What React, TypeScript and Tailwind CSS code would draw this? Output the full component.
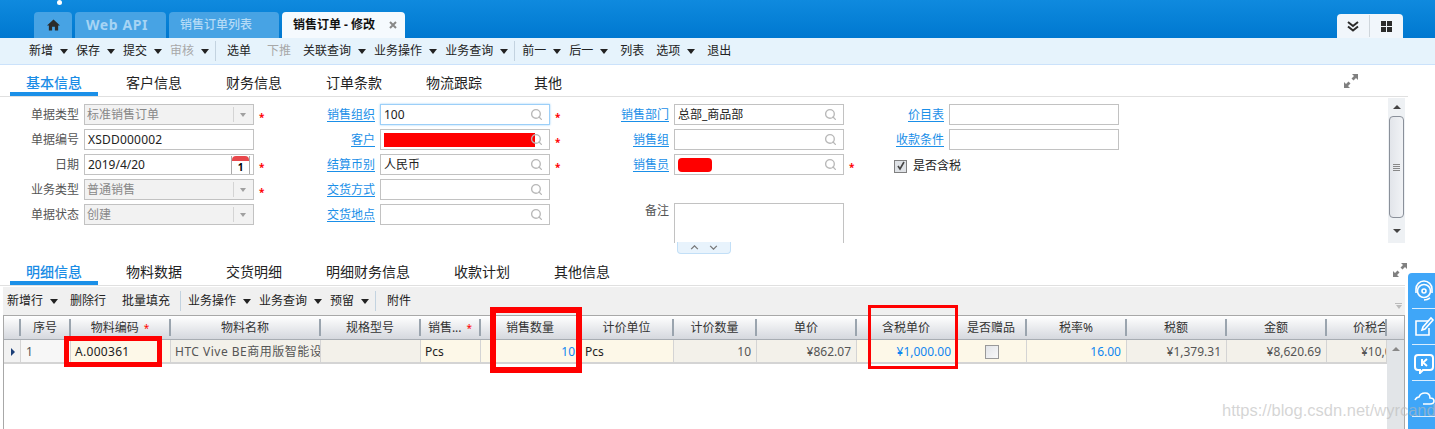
import React from "react";
import { Search } from "lucide-react";

const Caret = () => (
  <span className="ml-[7px] h-0 w-0 border-x-[4px] border-t-[5px] border-x-transparent border-t-[#222]"></span>
);

// toolbar entry, with a dropdown caret or as a plain button
const ToolItem = ({ label, menu, off }: { label: string; menu?: boolean; off?: boolean }) => (
  <div className={`flex items-center ${menu ? "" : "mx-1"} ${off ? "text-[#a8a8a8]" : "text-[#222]"}`}>
    {label}
    {menu && <Caret />}
  </div>
);

const ToolSep = () => <div className="-ml-[2px] -mr-px h-[20px] w-px bg-[#c3d3e0]"></div>;

const ExpandIcon = ({ className }: { className: string }) => (
  <svg viewBox="0 0 14 14" className={`h-[14px] w-[14px] ${className}`} fill="#808080">
    <path d="M8 0h6v6l-2-2-2.5 2.500-2-2L10 2z" />
    <path d="M0 14V8l2 2 2.500-2.500 2 2L4 12l2 2z" />
  </svg>
);

const TabRow = ({ tabs, right }: { tabs: { label: string; active?: boolean; className?: string }[]; right: React.ReactNode }) => (
  <div className="flex items-start justify-between border-b border-[#e0e0e0]">
    <div className="ml-[10px] flex gap-3 text-[14px] leading-[18px]">
      {tabs.map((t) => (
        <div
          key={t.label}
          className={`box-content flex h-[18px] items-center border-b-4 px-4 ${t.active ? "border-[#1b90e8] text-[#1b8de6] font-medium" : "border-transparent text-[#222]"} ${t.className ?? ""}`}
        >
          {t.label}
        </div>
      ))}
    </div>
    {right}
  </div>
);

const Star = () => <span className="w-[20px] pl-[5px] pt-[4px] text-[10px] font-bold leading-[16px] text-[#f00]">*</span>;

const Label = ({ text, link, w }: { text: string; link?: boolean; w: string }) => (
  <div className={`${w} mr-[5px] shrink-0 text-right ${link ? "text-[#1a8fe8]" : "text-[#555]"}`}>
    <span className={link ? "underline underline-offset-2" : ""}>{text}</span>
  </div>
);

const Lookup = ({ value, focus, children }: { value?: string; focus?: boolean; children?: React.ReactNode }) => (
  <div className={`flex h-[21px] w-[170px] items-center justify-between border pl-[3px] pr-[6px] text-[#222] ${focus ? "border-[#9ccff8] shadow-[0_0_2px_#9ccff8]" : "border-[#c2c2c2]"}`}>
    {children ?? <span>{value}</span>}
    <Search size={13} strokeWidth={2.5} className="shrink-0 text-[#b8b8b8]" />
  </div>
);

const Select = ({ value }: { value: string }) => (
  <div className="flex h-[21px] w-[170px] items-center border border-[#c2c2c2] bg-[#f2f2f2] pl-[2px] text-[#888]">
    <span className="flex-1">{value}</span>
    <div className="flex h-[15px] w-[20px] items-center justify-center border-l border-[#d4d4d4] pr-px">
      <span className="h-0 w-0 border-x-[3.5px] border-t-[4px] border-x-transparent border-t-[#a0a0a0]"></span>
    </div>
  </div>
);

const Row = ({ children }: { children: React.ReactNode }) => <div className="flex h-[21px] items-center">{children}</div>;

const columns = [
  { w: "w-[17px]", title: "" },
  { w: "w-[50px]", title: "序号" },
  { w: "w-[100px]", title: "物料编码", star: true },
  { w: "w-[150px]", title: "物料名称" },
  { w: "w-[100px]", title: "规格型号" },
  { w: "w-[60px]", title: "销售...", star: true },
  { w: "w-[100px]", title: "销售数量" },
  { w: "w-[93px]", title: "计价单位" },
  { w: "w-[83px]", title: "计价数量" },
  { w: "w-[100px]", title: "单价" },
  { w: "w-[100px]", title: "含税单价" },
  { w: "w-[70px]", title: "是否赠品" },
  { w: "w-[100px]", title: "税率%" },
  { w: "w-[100px]", title: "税额" },
  { w: "w-[100px]", title: "金额" },
  { w: "w-[60px]", title: "价税合计" },
];

const CREAM = "bg-[#fdf8e8] text-[#222]";
const READ = "bg-[#f3f1ea] text-[#555]";
const BLUE = "bg-[#fdf8e8] text-[#0f86f0]";

const cells = [
  { v: "", c: "bg-[#f2f2f2]" },
  { v: "1", c: "bg-[#f7f7f7] text-[#555] pl-[5px]" },
  { v: "A.000361", c: `${CREAM} pl-[4px] tracking-[0.3px]` },
  { v: "HTC Vive BE商用版智能设备", c: `${READ} pl-[4px] tracking-[0.5px]` },
  { v: "", c: READ },
  { v: "Pcs", c: `${CREAM} pl-[4px]` },
  { v: "10", c: `${BLUE} justify-end pr-[5px]` },
  { v: "Pcs", c: `${CREAM} pl-[4px]` },
  { v: "10", c: `${READ} justify-end pr-[5px]` },
  { v: "¥862.07", c: `${READ} justify-end pr-[5px]` },
  { v: "¥1,000.00", c: `${BLUE} justify-end pr-[5px]` },
  { v: "", c: CREAM },
  { v: "16.00", c: `${BLUE} justify-end pr-[5px]` },
  { v: "¥1,379.31", c: `${READ} justify-end pr-[5px]` },
  { v: "¥8,620.69", c: `${READ} justify-end pr-[5px]` },
  { v: "¥10,000.00", c: `${READ} pl-[34px]` },
];

const SideIcon = ({ children }: { children: React.ReactNode }) => (
  <div className="flex h-[36px] items-center justify-center border-b border-white/80">
    <svg viewBox="0 0 22 22" className="h-[22px] w-[22px]" fill="none" stroke="white" strokeWidth="1.6">
      {children}
    </svg>
  </div>
);

export default function App() {
  return (
    <div
      className="relative h-[429px] w-full overflow-hidden bg-white text-[12px] leading-[16px]"
      style={{ fontFamily: '"Noto Sans", "Noto Sans CJK SC", sans-serif' }}
    >
      {/* Top bar with page tabs */}
      <div className="relative flex h-[38px] items-end justify-between bg-gradient-to-b from-[#0f8ade] to-[#0078d0] pl-[34px] pr-[32px]">
        <div className="absolute left-[57px] top-0 h-[5px] w-[5px] rounded-full bg-white"></div>
        <div className="flex gap-[3px]">
          <div className="flex h-[26px] w-[38px] items-center justify-center rounded-t bg-[#47a3e4]">
            <svg viewBox="0 0 14 12" className="h-[12px] w-[13px]" fill="#2b2b2b">
              <path d="M7 0 0 6.500h2V12h3.500V8h3v4H12V6.500h2z" />
            </svg>
          </div>
          <div className="flex h-[26px] w-[91px] items-center rounded-t bg-[#47a3e4] pl-[11px] text-[14px] font-bold tracking-[0.6px] text-[#a6d4f4]">Web API</div>
          <div className="flex h-[26px] w-[110px] items-center rounded-t bg-[#47a3e4] pl-[11px] font-medium text-[#b5dbf6]">销售订单列表</div>
          <div className="flex h-[26px] w-[123px] items-center justify-between rounded-t bg-[#f5fafe] pl-[11px] pr-[8px] font-bold text-[#111]">
            <span>销售订单 - 修改</span>
            <svg viewBox="0 0 8 8" className="h-[8px] w-[8px]" fill="none" stroke="#888" strokeWidth="2">
              <path d="m1 1 6 6M7 1 1 7" />
            </svg>
          </div>
        </div>
        <div className="flex h-[24px] w-[66px] items-center rounded-t bg-[#f1f6fb]">
          <div className="flex h-[22px] w-[33px] items-center justify-center border-r border-[#cfd6dc]">
            <svg viewBox="0 0 12 11" className="h-[11px] w-[12px]" fill="none" stroke="#2b2b2b" strokeWidth="2">
              <path d="m1 1 5 4 5-4M1 5.500l5 4 5-4" />
            </svg>
          </div>
          <div className="flex flex-1 items-center justify-center">
            <div className="grid grid-cols-2 gap-px">
              <span className="h-[5px] w-[5px] bg-[#2b2b2b]"></span>
              <span className="h-[5px] w-[5px] bg-[#2b2b2b]"></span>
              <span className="h-[5px] w-[5px] bg-[#2b2b2b]"></span>
              <span className="h-[5px] w-[5px] bg-[#2b2b2b]"></span>
            </div>
          </div>
        </div>
      </div>

      {/* Main toolbar */}
      <div className="flex h-[27px] items-center gap-2 border-b border-[#cbe2fb] bg-[#e6f3fc] pl-[29px]">
        <ToolItem label="新增" menu />
        <ToolItem label="保存" menu />
        <ToolItem label="提交" menu />
        <ToolItem label="审核" menu off />
        <ToolSep />
        <ToolItem label="选单" />
        <ToolItem label="下推" off />
        <ToolItem label="关联查询" menu />
        <ToolItem label="业务操作" menu />
        <ToolItem label="业务查询" menu />
        <ToolSep />
        <ToolItem label="前一" menu />
        <ToolItem label="后一" menu />
        <ToolItem label="列表" />
        <ToolItem label="选项" menu />
        <ToolItem label="退出" />
      </div>

      <div className="w-[1408px] pt-[9px]">
        <TabRow
          tabs={[
            { label: "基本信息", active: true },
            { label: "客户信息" },
            { label: "财务信息" },
            { label: "订单条款" },
            { label: "物流跟踪" },
            { label: "其他", className: "ml-2" },
          ]}
          right={<ExpandIcon className="mr-[50px]" />}
        />
      </div>

      {/* Header form */}
      <div className="relative flex h-[146px] w-[1405px] justify-between">
        <div className="flex h-full overflow-hidden pt-[7px]">
          <div className="flex w-[274px] flex-col gap-1">
            <Row><Label w="w-[79px]" text="单据类型" /><Select value="标准销售订单" /><Star /></Row>
            <Row>
              <Label w="w-[79px]" text="单据编号" />
              <div className="flex h-[21px] w-[170px] items-center border border-[#c2c2c2] pl-[3px] tracking-[0.2px] text-[#222]">XSDD000002</div>
            </Row>
            <Row>
              <Label w="w-[79px]" text="日期" />
              <div className="flex h-[21px] w-[170px] items-center justify-between border border-[#c2c2c2] pl-[3px] pr-[3px] text-[#222]">
                2019/4/20
                <div className="flex h-[18px] w-[19px] flex-col border-x border-[#aaa]">
                  <div className="h-[5px] rounded-t-sm bg-[#e8484c]"></div>
                  <div className="flex-1 text-center text-[10px] font-bold leading-[13px] text-black">1</div>
                </div>
              </div>
              <Star />
            </Row>
            <Row><Label w="w-[79px]" text="业务类型" /><Select value="普通销售" /><Star /></Row>
            <Row><Label w="w-[79px]" text="单据状态" /><Select value="创建" /></Row>
          </div>
          <div className="flex w-[296px] flex-col gap-1">
            <Row><Label w="w-[101px]" link text="销售组织" /><Lookup value="100" focus /><Star /></Row>
            <Row>
              <Label w="w-[101px]" link text="客户" />
              <Lookup>
                <div className="-mr-[6px] h-[14px] w-[151px] shrink-0 bg-[#f00]"></div>
              </Lookup>
              <Star />
            </Row>
            <Row><Label w="w-[101px]" link text="结算币别" /><Lookup value="人民币" /><Star /></Row>
            <Row><Label w="w-[101px]" link text="交货方式" /><Lookup /></Row>
            <Row><Label w="w-[101px]" link text="交货地点" /><Lookup /></Row>
          </div>
          <div className="flex w-[294px] flex-col gap-1">
            <Row><Label w="w-[99px]" link text="销售部门" /><Lookup value="总部_商品部" /></Row>
            <Row><Label w="w-[99px]" link text="销售组" /><Lookup /></Row>
            <Row>
              <Label w="w-[99px]" link text="销售员" />
              <Lookup>
                <div className="h-[14px] w-[34px] rounded-sm bg-[#f00]"></div>
              </Lookup>
              <Star />
            </Row>
            <Row><span></span></Row>
            <div className="flex h-[40px] items-start">
              <Label w="w-[99px]" text="备注" />
              <div className="mt-0 h-[40px] w-[170px] border border-b-0 border-[#c2c2c2]"></div>
            </div>
          </div>
          <div className="flex w-[255px] flex-col gap-1">
            <Row><Label w="w-[80px]" link text="价目表" /><div className="h-[21px] w-[170px] border border-[#c2c2c2]"></div></Row>
            <Row><Label w="w-[80px]" link text="收款条件" /><div className="h-[21px] w-[170px] border border-[#c2c2c2]"></div></Row>
            <Row>
              <div className="ml-[30px] mr-[6px] mt-[3px] flex h-[13px] w-[13px] items-center justify-center border border-[#808080] bg-[#dfe2e6]">
                <svg viewBox="0 0 10 10" className="h-[10px] w-[10px]" fill="none" stroke="#444" strokeWidth="1.6">
                  <path d="m2 5 2 3 4-7" />
                </svg>
              </div>
              <span className="mt-[3px] text-[#222]">是否含税</span>
            </Row>
          </div>
        </div>

        {/* Form scrollbar */}
        <div className="mt-px flex w-[17px] flex-col items-center bg-[#eef1f4]">
          <div className="flex h-[18px] items-center justify-center">
            <span className="h-0 w-0 border-x-[4px] border-b-[4px] border-x-transparent border-b-[#444]"></span>
          </div>
          <div className="flex h-[102px] w-[15px] items-center justify-center rounded-sm border border-[#8a909a] bg-gradient-to-r from-[#e2e5ea] to-[#f1f3f6]">
            <div className="flex w-[7px] flex-col gap-px">
              <span className="h-px bg-[#888]"></span>
              <span className="h-px bg-[#888]"></span>
              <span className="h-px bg-[#888]"></span>
              <span className="h-px bg-[#888]"></span>
            </div>
          </div>
          <div className="flex flex-1 items-center justify-center">
            <span className="h-0 w-0 border-x-[4px] border-t-[4px] border-x-transparent border-t-[#444]"></span>
          </div>
        </div>

        {/* Collapse handle under the remark box */}
        <div className="absolute left-[677px] top-[145px] flex h-[12px] w-[54px] items-center justify-center gap-[10px] rounded-b border border-t-0 border-[#c2dff7] bg-[#e8f3fc]">
          <svg viewBox="0 0 10 6" className="h-[5px] w-[9px]" fill="none" stroke="#777" strokeWidth="1.5"><path d="m1 5 4-4 4 4" /></svg>
          <svg viewBox="0 0 10 6" className="h-[5px] w-[9px]" fill="none" stroke="#777" strokeWidth="1.5"><path d="m1 1 4 4 4-4" /></svg>
        </div>
      </div>

      {/* Detail section */}
      <div className="mt-[20px] w-[1405px]">
        <TabRow
          tabs={[
            { label: "明细信息", active: true },
            { label: "物料数据" },
            { label: "交货明细" },
            { label: "明细财务信息" },
            { label: "收款计划" },
            { label: "其他信息" },
          ]}
          right={<ExpandIcon className="-mr-[2px]" />}
        />
      </div>

      <div className="ml-[3px] mt-px flex h-[28px] w-[1402px] items-center gap-2 bg-[#f0f0f0] pl-[4px]">
        <ToolItem label="新增行" menu />
        <ToolItem label="删除行" />
        <ToolItem label="批量填充" />
        <ToolSep />
        <ToolItem label="业务操作" menu />
        <ToolItem label="业务查询" menu />
        <ToolItem label="预留" menu />
        <ToolSep />
        <ToolItem label="附件" />
        <div className="ml-auto mr-[3px] mt-[10px] flex flex-col items-center gap-px">
          <span className="h-px w-[7px] bg-[#bbb]"></span>
          <span className="h-0 w-0 border-x-[3.5px] border-t-[4px] border-x-transparent border-t-[#bbb]"></span>
        </div>
      </div>

      {/* Lines grid */}
      <div className="ml-[3px] h-[200px] w-[1402px] border-x border-t border-[#a8a8a8]">
        <div className="flex h-[24px] border-b border-[#a8adb3] bg-gradient-to-b from-white to-[#d5d8de]">
          {columns.map((col, i) => (
            <div key={i} className={`flex ${col.w} shrink-0 items-center overflow-hidden`}>
              <div className={`h-[17px] flex-1 overflow-hidden whitespace-nowrap border-r-2 border-[#9aa4ae] leading-[17px] text-[#333] ${i === 15 ? "pl-[26px] text-left" : "text-center"}`}>
                {col.title}
                {col.star && <span className="ml-[5px] text-[10px] text-[#f00]">*</span>}
              </div>
            </div>
          ))}
        </div>
        <div className="flex">
          <div className="flex h-[24px] border-b-2 border-[#d4d4d4]">
            {cells.map((cell, i) => (
              <div
                key={i}
                className={`flex ${columns[i].w} shrink-0 items-center overflow-hidden whitespace-nowrap border-r border-[#d4d4d4] pt-[2px] ${cell.c}`}
              >
                {i === 0 && <span className="ml-[7px] h-0 w-0 border-y-[4px] border-l-[4px] border-y-transparent border-l-[#1c3f78]"></span>}
                {i === 11 ? (
                  <span className="mx-auto h-[14px] w-[14px] border border-[#999] bg-gradient-to-br from-[#e2e4e8] to-[#f8f8f8]"></span>
                ) : (
                  cell.v
                )}
              </div>
            ))}
          </div>
          <div className="flex h-[100px] flex-1 justify-center bg-[#e2e5e8] pt-[7px]">
            <span className="h-0 w-0 border-x-[4px] border-b-[4px] border-x-transparent border-b-[#888]"></span>
          </div>
        </div>
      </div>

      {/* Red annotation boxes */}
      <div className="absolute left-[64px] top-[336px] h-[31px] w-[98px] border-[5px] border-[#f00]"></div>
      <div className="absolute left-[490px] top-[307px] h-[66px] w-[92px] border-[6px] border-[#f00]"></div>
      <div className="absolute left-[868px] top-[305px] h-[64px] w-[90px] border-[3px] border-[#f00]"></div>

      {/* Side service dock */}
      <div className="absolute left-[1408px] top-[273px] h-[156px] w-[27px] rounded-tl-sm bg-[#3fa6f8] pl-[4px]">
        <SideIcon>
          <circle cx="11" cy="11" r="6.500" />
          <circle cx="11" cy="11" r="2" />
          <path d="M3 13V9a8 8 0 0 1 16 0v4M17 18c-2 1.500-4 2-6 2" />
        </SideIcon>
        <SideIcon>
          <path d="M15 5H3v14h13v-7" />
          <path d="m9 14 1-3 8-9 2 2-8 9z" />
        </SideIcon>
        <SideIcon>
          <path d="M5 3h12a3 3 0 0 1 3 3v9a3 3 0 0 1-3 3H10l-3 3v-3H5a3 3 0 0 1-3-3V6a3 3 0 0 1 3-3z" strokeWidth="2" />
          <path d="M9 7v7M14 7l-4 3.500 4 3.500" strokeWidth="2" />
        </SideIcon>
        <SideIcon>
          <path d="M2 12c1-2 2-3 4-3 1-3 3-4 6-4 3 0 5 2 5 5 2 0 4 1 4 3s-2 3-4 3H10" />
        </SideIcon>
      </div>

      {/* Image watermark */}
      <div
        className="absolute left-[1222px] top-[400px] text-[16.500px] leading-[20px] text-[#b9b9b9]/60"
        style={{ fontFamily: '"Liberation Sans", sans-serif' }}
      >
        https://blog.csdn.net/wyrcand
      </div>
    </div>
  );
}
